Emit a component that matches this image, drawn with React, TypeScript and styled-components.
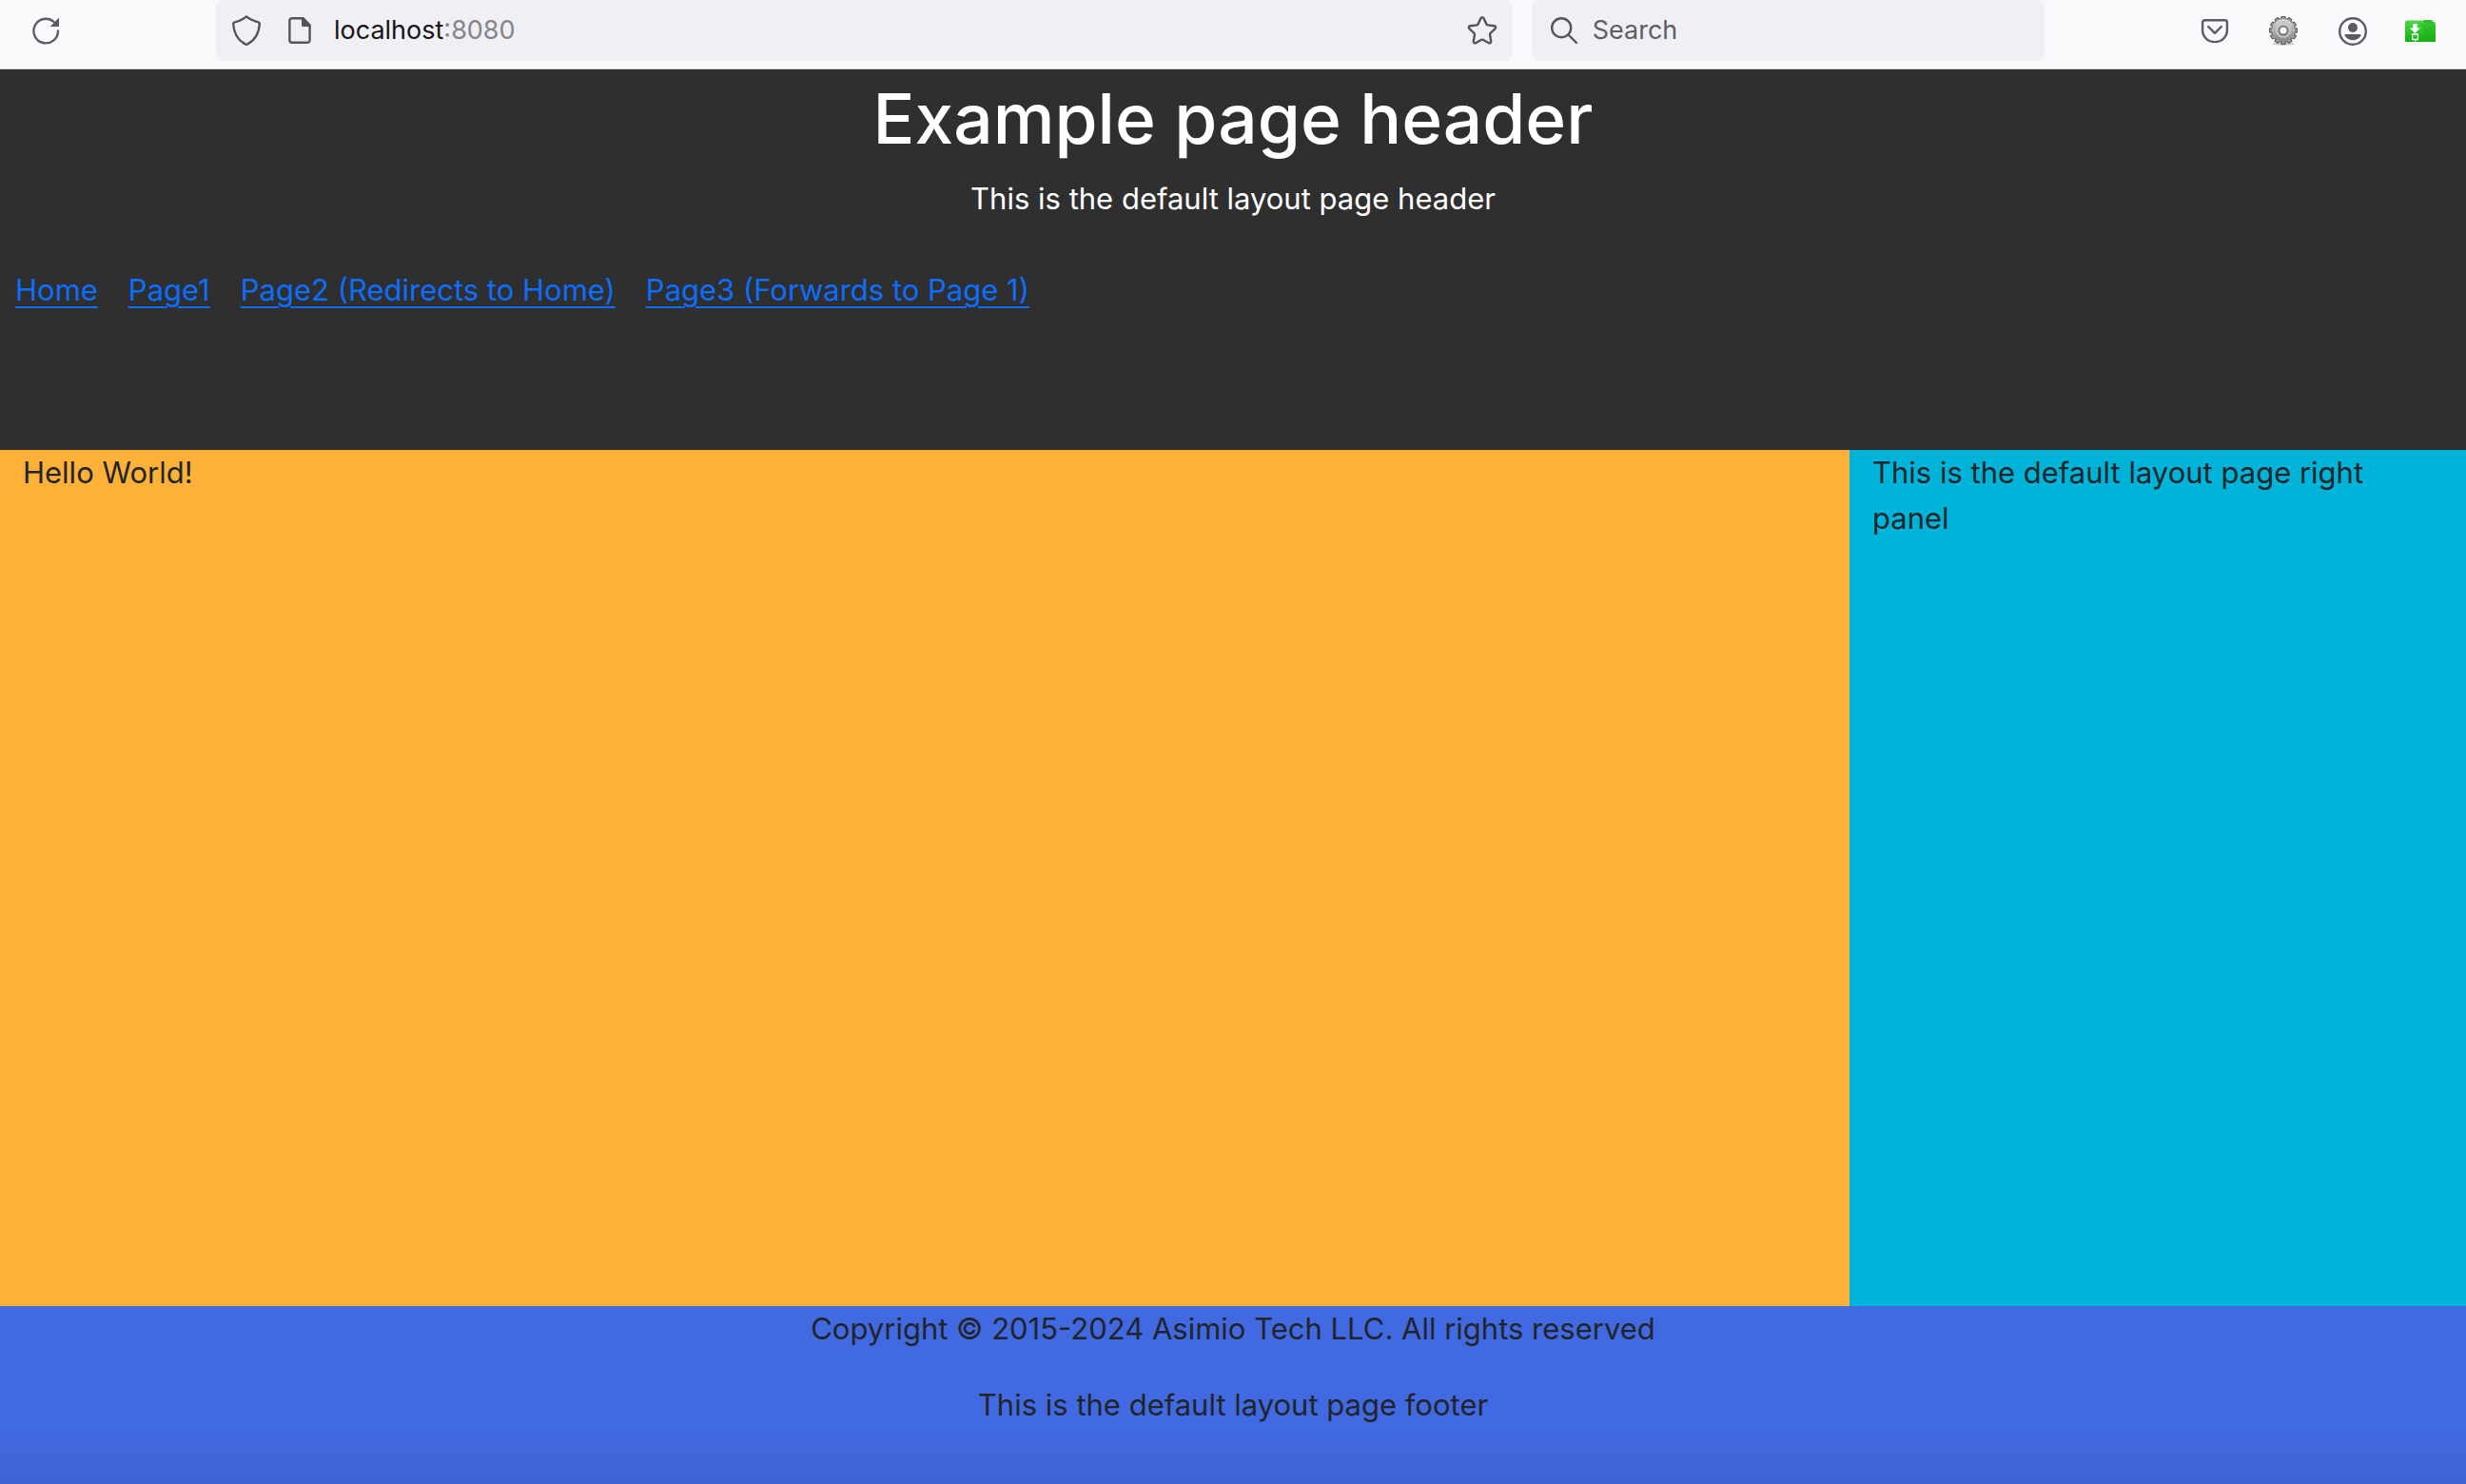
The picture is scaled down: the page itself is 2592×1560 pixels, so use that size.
import React from "react";
import styled, { createGlobalStyle } from "styled-components";

const GlobalStyle = createGlobalStyle`
  *, *::before, *::after { box-sizing: border-box; }
  body {
    margin: 0;
    font-family: Inter, "Liberation Sans", sans-serif;
    font-size: 31px;
    line-height: 48px;
    color: #212529;
  }
`;

const Page = styled.div`
  display: flex;
  flex-direction: column;
  min-height: 100vh;
`;

const Toolbar = styled.div`
  display: flex;
  align-items: flex-start;
  height: 73px;
  padding: 0 32px;
  background: #f9f9fb;
  border-bottom: 1px solid #cccccc;
`;

const ToolButton = styled.button`
  display: flex;
  flex: none;
  align-items: center;
  justify-content: center;
  width: 32px;
  height: 64px;
  padding: 0;
  border: 0;
  background: none;
  color: #5b5b66;
`;

const Fields = styled.div`
  display: grid;
  flex: 1;
  grid-template-columns: 1362fr 539fr;
  gap: 20px;
  margin: 0 163px;
`;

const Field = styled.div`
  display: flex;
  align-items: center;
  min-width: 0;
  height: 64px;
  padding: 0 16px;
  border-radius: 8px;
  background: #f0eff4;
  font-size: 27px;
  line-height: 34px;
`;

const FieldButton = styled(ToolButton)<{ $after?: number }>`
  margin-right: ${(p) => p.$after ?? 0}px;
  color: #55545a;
`;

const TextInput = styled.input<{ $fit?: boolean }>`
  ${(p) => (p.$fit ? "field-sizing: content;" : "flex: 1;")}
  min-width: 0;
  padding: 0;
  border: 0;
  outline: 0;
  background: none;
  color: #15141a;
  font: inherit;
  &::placeholder {
    color: #5f5e64;
    opacity: 1;
  }
`;

const Port = styled.span`
  flex: 1;
  color: #858489;
`;

const Actions = styled.div`
  display: flex;
  gap: 40px;
`;

const Header = styled.header`
  min-height: 400px;
  background: #2f2f2f;
  color: #ffffff;
  text-align: center;
`;

const Title = styled.h1`
  margin: 0 0 16px;
  padding-top: 8px;
  font-size: 73px;
  font-weight: 500;
  line-height: 88px;
`;

const Text = styled.p`
  margin: 0 0 32px;
`;

const Nav = styled.nav`
  display: flex;
  gap: 32px;
  padding: 16px;
`;

const NavLink = styled.a`
  color: #0d6efd;
  text-decoration: underline;
  text-decoration-thickness: 2px;
  text-underline-offset: 6px;
`;

const Columns = styled.div`
  display: grid;
  grid-template-columns: 3fr 1fr;
  min-height: 900px;
`;

const Content = styled.main`
  padding: 0 24px;
  background: #feb139;
`;

const RightPanel = styled.aside`
  padding: 0 24px;
  background: #00b4d9;
`;

const Footer = styled.footer`
  flex: 1;
  background: linear-gradient(to bottom, #4169e1 70%, #3e63d3);
  text-align: center;
`;

const Icon = ({ children }: { children: React.ReactNode }) => (
  <svg
    width="32"
    height="32"
    viewBox="0 0 32 32"
    fill="none"
    stroke="currentColor"
    strokeWidth="2.4"
    strokeLinecap="round"
    strokeLinejoin="round"
    aria-hidden="true"
  >
    {children}
  </svg>
);

const ReloadIcon = () => (
  <Icon>
    <path d="M29 16.5A12.8 12.8 0 1 1 24.5 6.8" />
    <path d="M30 2.6V11.2a.8.8 0 0 1-.8.8H20.8Z" fill="currentColor" stroke="none" />
  </Icon>
);

const ShieldIcon = () => (
  <Icon>
    <path d="M16 1.4c3.8 3.2 8 4.8 12.400 5.900 1 .3 1.500 1 1.400 2C29.200 19 25.500 26 17.200 30.400q-1.200.600-2.400 0C6.500 26 2.800 19 2.200 9.300c-.100-1 .400-1.700 1.400-2C8 6.200 12.200 4.600 16 1.400Z" />
  </Icon>
);

const DocumentIcon = () => (
  <Icon>
    <path d="M19.500 3.200H8a2.600 2.600 0 0 0-2.600 2.600v20.400A2.600 2.600 0 0 0 8 28.800h16a2.600 2.600 0 0 0 2.600-2.600V10.500Z" />
    <path d="M18 2.500h2L27.500 10v2H19.500a1.500 1.500 0 0 1-1.500-1.500Z" fill="currentColor" stroke="none" />
  </Icon>
);

const StarIcon = () => (
  <Icon>
    <path d="M14.600 3c.600-1.200 2.200-1.200 2.800 0l3.100 6.600q.300.700 1.100.8l7.100.9c1.400.2 1.900 1.800.9 2.800L24.400 19q-.500.500-.4 1.200l1.200 7.300c.200 1.300-1.100 2.300-2.300 1.700L16.800 25.800q-.8-.4-1.600 0L9.100 29.200c-1.200.600-2.500-.4-2.300-1.700L8 20.200q.100-.7-.4-1.200L2.400 14.100c-1-1-.5-2.600.9-2.800l7.100-.9q.8-.1 1.100-.8Z" />
  </Icon>
);

const SearchIcon = () => (
  <Icon>
    <circle cx="15.200" cy="13.200" r="10" />
    <path d="M22.500 20.500 31 29" />
  </Icon>
);

const PocketIcon = () => (
  <Icon>
    <path d="M5.500 5.200h21a2.400 2.400 0 0 1 2.400 2.400v8.500a12.900 12 0 0 1-25.800 0V7.600A2.400 2.400 0 0 1 5.500 5.200Z" />
    <path d="m9.200 12 6.800 6.800 6.800-6.800" />
  </Icon>
);

const TEETH = Array.from({ length: 12 }, (_, i) => i * 30);

const GearIcon = () => (
  <Icon>
    <defs>
      <linearGradient id="metal" x1="0" y1="0" x2="0" y2="1">
        <stop offset="0" stopColor="#d8d8d8" />
        <stop offset="1" stopColor="#868686" />
      </linearGradient>
    </defs>
    <ellipse cx="16" cy="30" rx="12" ry="1.800" fill="#d4d4d6" stroke="none" />
    <g fill="#a2a2a2" stroke="#5c5c5c" strokeWidth="1.200">
      {TEETH.map((a) => (
        <path key={a} d="M13.200 5 14.200 1.600h3.600L18.800 5Z" transform={`rotate(${a} 16 16)`} />
      ))}
    </g>
    <circle cx="16" cy="16" r="12" fill="url(#metal)" stroke="none" />
    <circle cx="16" cy="16" r="7" stroke="#c9c9c9" strokeWidth="1.500" />
    <circle cx="16" cy="16" r="4.400" fill="#fbfbfb" stroke="#6f6f6f" strokeWidth="1.600" />
  </Icon>
);

const AccountIcon = () => (
  <Icon>
    <circle cx="17" cy="17" r="13.800" />
    <circle cx="17" cy="13" r="5" fill="currentColor" stroke="none" />
    <path d="M9.500 20h15c1 0 1.300.9.800 1.700a9.800 9.800 0 0 1-16.600 0c-.500-.8-.2-1.700.8-1.700Z" fill="currentColor" stroke="none" />
  </Icon>
);

const FolderIcon = () => (
  <Icon>
    <defs>
      <linearGradient id="green" x1="0" y1="0" x2="0" y2="1">
        <stop offset="0" stopColor="#4fd64b" />
        <stop offset="1" stopColor="#12b010" />
      </linearGradient>
    </defs>
    <g stroke="none">
      <path d="M18 7.500 19.500 5h8.500l1.500 2 2 .5V28H18Z" fill="#35bd31" />
      <path d="M0 7.500Q0 5.500 2 5.500H18L21 9H32V28H1Q0 28 0 27Z" fill="url(#green)" />
      <path d="M15 8q8 8 4 20H32V9.500H20Z" fill="#1fae1b" opacity=".45" />
      <path d="M8.200 9h4.400v4.500h3.200L10.400 19 5 13.500h3.200Z" fill="#ffffff" />
      <path d="M10 26h1v2h-1z" fill="#c7f3c5" />
    </g>
    <rect x="7.600" y="20" width="5.800" height="5.500" stroke="#ffffff" strokeWidth="1.300" />
  </Icon>
);

const links = ["Home", "Page1", "Page2 (Redirects to Home)", "Page3 (Forwards to Page 1)"];

export default function App() {
  return (
    <Page>
      <GlobalStyle />
      <Toolbar>
        <ToolButton aria-label="Reload"><ReloadIcon /></ToolButton>
        <Fields>
          <Field>
            <FieldButton aria-label="Tracking protection" $after={24}><ShieldIcon /></FieldButton>
            <FieldButton aria-label="Site information" $after={20}><DocumentIcon /></FieldButton>
            <TextInput $fit aria-label="Address" defaultValue="localhost" />
            <Port>:8080</Port>
            <FieldButton aria-label="Bookmark this page"><StarIcon /></FieldButton>
          </Field>
          <Field>
            <FieldButton aria-label="Run search" $after={16}><SearchIcon /></FieldButton>
            <TextInput type="search" aria-label="Search" placeholder="Search" />
          </Field>
        </Fields>
        <Actions>
          <ToolButton aria-label="Pocket"><PocketIcon /></ToolButton>
          <ToolButton aria-label="Settings"><GearIcon /></ToolButton>
          <ToolButton aria-label="Account"><AccountIcon /></ToolButton>
          <ToolButton aria-label="Downloads folder"><FolderIcon /></ToolButton>
        </Actions>
      </Toolbar>
      <Header>
        <Title>Example page header</Title>
        <Text>This is the default layout page header</Text>
        <Nav>
          {links.map((label) => (
            <NavLink key={label} href="#">{label}</NavLink>
          ))}
        </Nav>
      </Header>
      <Columns>
        <Content>Hello World!</Content>
        <RightPanel>This is the default layout page right panel</RightPanel>
      </Columns>
      <Footer>
        <Text>Copyright © 2015-2024 Asimio Tech LLC. All rights reserved</Text>
        <Text>This is the default layout page footer</Text>
      </Footer>
    </Page>
  );
}
